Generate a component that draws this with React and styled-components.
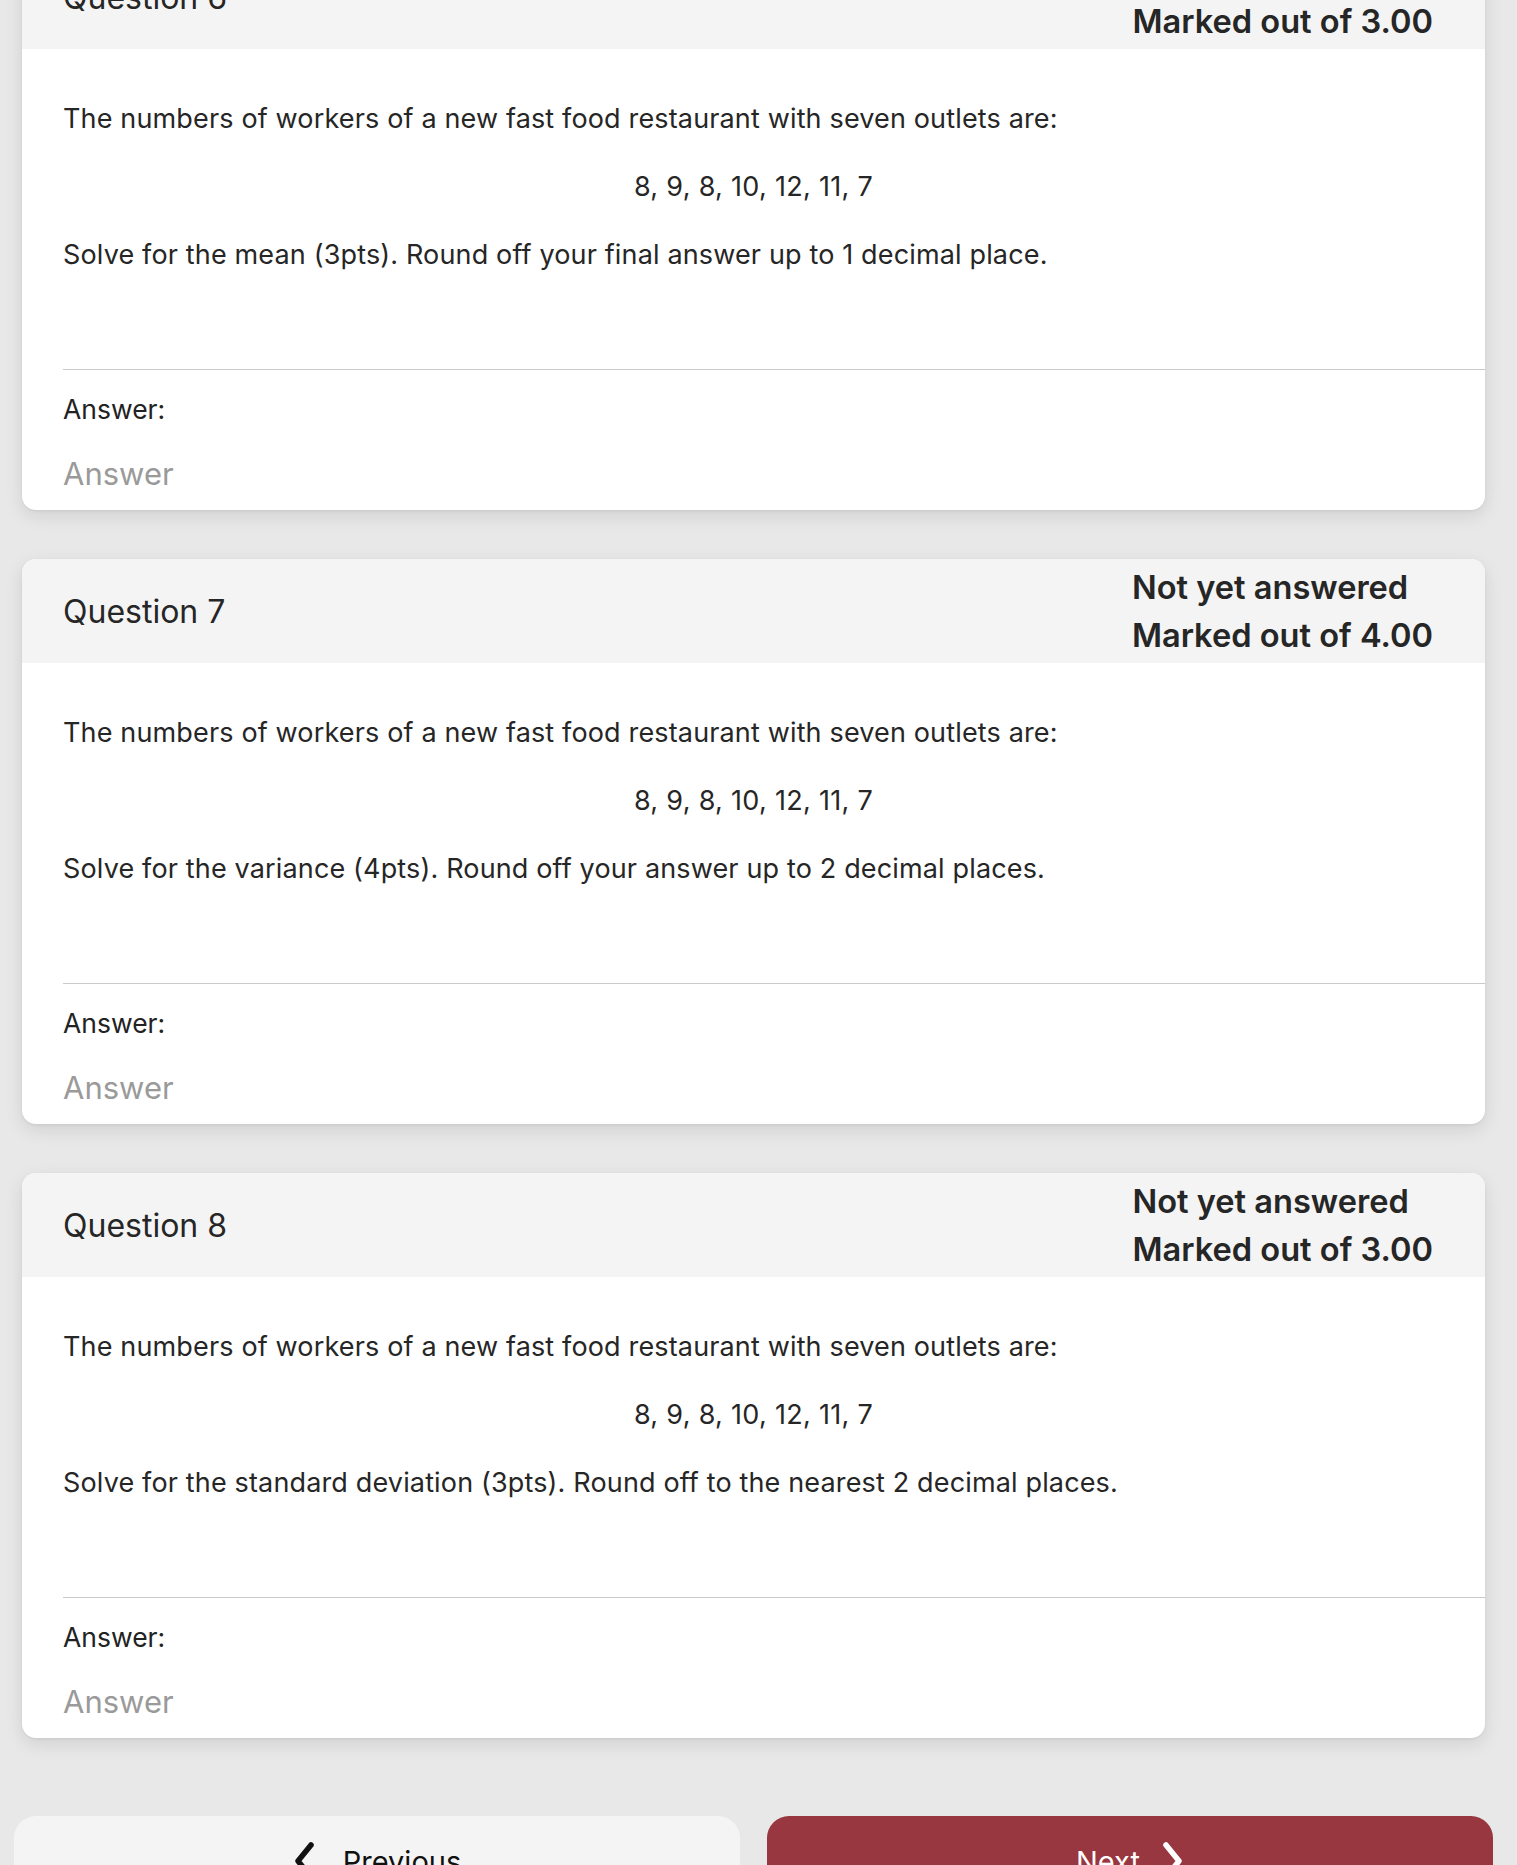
import React from 'react';
import styled, { createGlobalStyle } from 'styled-components';

const questions = [
  {
    number: 6,
    marks: '3.00',
    task: 'Solve for the mean (3pts). Round off your final answer up to 1 decimal place.',
  },
  {
    number: 7,
    marks: '4.00',
    task: 'Solve for the variance (4pts). Round off your answer up to 2 decimal places.',
  },
  {
    number: 8,
    marks: '3.00',
    task: 'Solve for the standard deviation (3pts). Round off to the nearest 2 decimal places.',
  },
];

const GlobalStyle = createGlobalStyle`
  html, body {
    margin: 0;
    padding: 0;
    background: #e8e8e8;
    font-family: Inter, 'Noto Sans', 'DejaVu Sans', sans-serif;
    color: #262626;
    overflow: hidden;
  }
`;

function Chevron({ direction, color }) {
  const points = direction === 'left' ? '18,4 5,20 18,36' : '5,4 18,20 5,36';
  return (
    <svg width='23' height='40' viewBox='0 0 23 40'>
      <polyline
        points={points}
        fill='none'
        stroke={color}
        strokeWidth='5.5'
        strokeLinecap='round'
        strokeLinejoin='round'
      />
    </svg>
  );
}

function QuestionCard({ number, marks, task }) {
  return (
    <Card>
      <Header>
        <QTitle>Question {number}</QTitle>
        <Status>
          <div>Not yet answered</div>
          <div>Marked out of {marks}</div>
        </Status>
      </Header>
      <Body>
        <Content>
          <Text>The numbers of workers of a new fast food restaurant with seven outlets are:</Text>
          <Text center>8, 9, 8, 10, 12, 11, 7</Text>
          <Text>{task}</Text>
        </Content>
        <AnswerBox>
          <AnswerLabel>Answer:</AnswerLabel>
          <AnswerInput type='text' placeholder='Answer' />
        </AnswerBox>
      </Body>
    </Card>
  );
}

export default function App() {
  return (
    <>
      <GlobalStyle />
      <Page>
        <CardList>
          {questions.map((q) => (
            <QuestionCard key={q.number} {...q} />
          ))}
        </CardList>
        <NavRow>
          <NavButton>
            <Chevron direction='left' color='#111' />
            <span>Previous</span>
          </NavButton>
          <NavButton primary>
            <span>Next</span>
            <Chevron direction='right' color='#fff' />
          </NavButton>
        </NavRow>
      </Page>
    </>
  );
}

const Page = styled.div`
  width: 1517px;
  height: 1865px;
  overflow: hidden;
`;

const CardList = styled.div`
  display: flex;
  flex-direction: column;
  gap: 49px;
  margin-top: -55px;
  padding: 0 32px 0 22px;
`;

const Card = styled.section`
  background: #fff;
  border-radius: 14px;
  overflow: hidden;
  box-shadow: 0 6px 18px rgba(0, 0, 0, 0.1), 0 1px 3px rgba(0, 0, 0, 0.06);
`;

const Header = styled.div`
  height: 104px;
  box-sizing: border-box;
  display: flex;
  align-items: center;
  justify-content: space-between;
  padding: 0 52px 0 41px;
  background: #f4f4f4;
`;

const QTitle = styled.h2`
  margin: 0;
  font-size: 32px;
  font-weight: 400;
  color: #262626;
`;

const Status = styled.div`
  font-size: 32.6px;
  font-weight: 600;
  line-height: 48px;
  color: #262626;
`;

const Body = styled.div`
  padding-left: 41px;
`;

const Content = styled.div`
  display: flex;
  flex-direction: column;
  gap: 32px;
  padding: 52px 41px 96px 0;
`;

const Text = styled.p`
  margin: 0;
  font-size: 27px;
  line-height: 36px;
  letter-spacing: ${(p) => (p.center ? '0.3px' : '0.15px')};
  text-align: ${(p) => (p.center ? 'center' : 'left')};
`;

const AnswerBox = styled.div`
  display: flex;
  flex-direction: column;
  gap: 28px;
  padding: 22px 0 18px;
  border-top: 1.5px solid #cacaca;
`;

const AnswerLabel = styled.label`
  font-size: 26.5px;
  line-height: 34px;
  color: #222;
`;

const AnswerInput = styled.input`
  border: none;
  outline: none;
  padding: 0;
  margin: 0;
  height: 38px;
  font-family: inherit;
  font-size: 31px;
  color: #222;
  background: transparent;

  &::placeholder {
    color: #9a9a9a;
  }
`;

const NavRow = styled.div`
  display: flex;
  gap: 27px;
  margin-top: 78px;
  padding: 0 24px 0 14px;
`;

const NavButton = styled.button`
  flex: 1;
  height: 90px;
  display: flex;
  align-items: center;
  justify-content: center;
  gap: ${(p) => (p.primary ? '21px' : '27px')};
  border: none;
  border-radius: 22px;
  font-family: inherit;
  font-size: 29px;
  color: ${(p) => (p.primary ? '#fff' : '#111')};
  background: ${(p) => (p.primary ? '#993740' : '#f4f4f4')};
`;
